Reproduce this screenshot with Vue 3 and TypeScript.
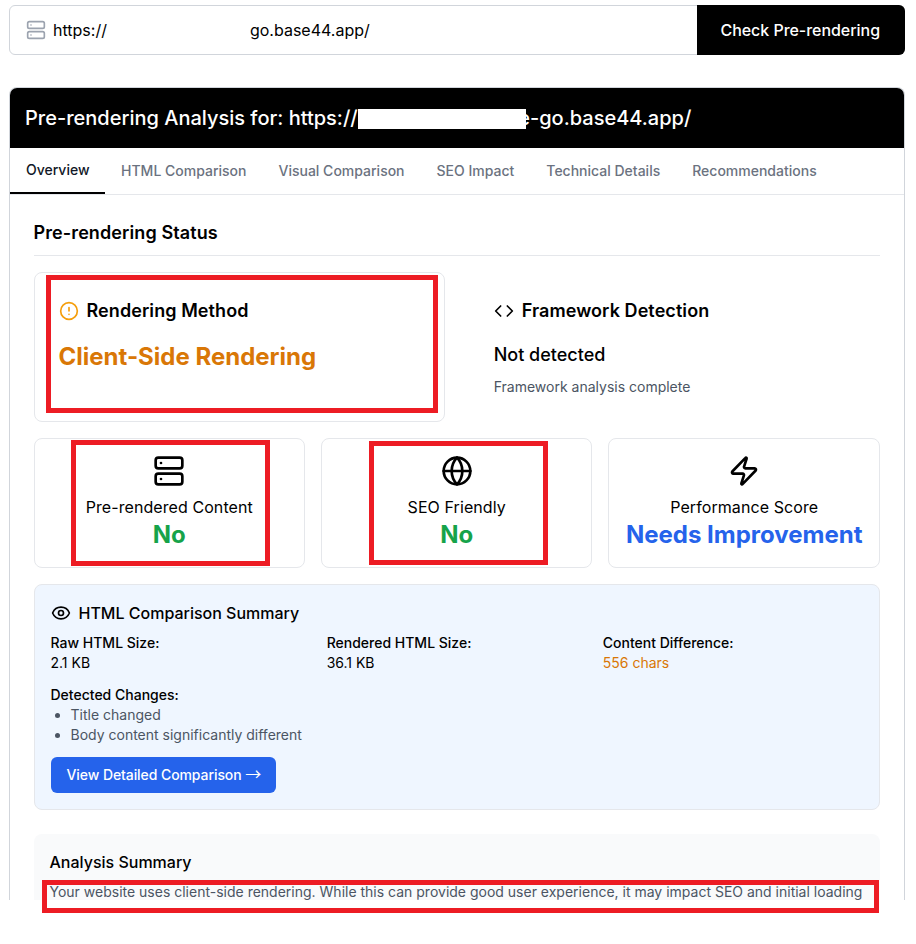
<script setup lang="ts">
const tabs: string[] = ['HTML Comparison', 'Visual Comparison', 'SEO Impact', 'Technical Details', 'Recommendations']
</script>

<template>
  <div class="root">
    <div class="page">
      <form class="search" @submit.prevent>
        <div class="url">
          <svg class="icon url-icon" viewBox="0 0 24 24">
            <rect x="2" y="2" width="20" height="8" rx="2" />
            <rect x="2" y="14" width="20" height="8" rx="2" />
            <line x1="6" y1="6" x2="6.01" y2="6" />
            <line x1="6" y1="18" x2="6.01" y2="18" />
          </svg>
          <span>https://</span>
          <span class="url-end">go.base44.app/</span>
        </div>
        <button class="check" type="button">Check Pre-rendering</button>
      </form>

      <section class="report">
        <header class="report-head">
          <h1>Pre-rendering Analysis for: https://<span class="mask"></span><span class="peek">e</span>-go.base44.app/</h1>
        </header>
        <nav class="tabs">
          <a class="tab active">Overview</a>
          <a v-for="t in tabs" :key="t" class="tab">{{ t }}</a>
        </nav>
        <div class="content">
          <h2 class="status-title">Pre-rendering Status</h2>

          <div class="two">
            <div class="panel">
              <h3 class="panel-title">
                <svg class="icon amber" viewBox="0 0 24 24">
                  <circle cx="12" cy="12" r="10" />
                  <line x1="12" y1="8" x2="12" y2="12" />
                  <line x1="12" y1="16" x2="12.01" y2="16" />
                </svg>
                Rendering Method
              </h3>
              <p class="method">Client-Side Rendering</p>
            </div>
            <div class="panel plain">
              <h3 class="panel-title">
                <svg class="icon" viewBox="0 0 24 24">
                  <polyline points="16 18 22 12 16 6" />
                  <polyline points="8 6 2 12 8 18" />
                </svg>
                Framework Detection
              </h3>
              <p class="detected">Not detected</p>
              <p class="note">Framework analysis complete</p>
            </div>
          </div>

          <div class="three">
            <div class="metric">
              <svg class="icon big" viewBox="0 0 24 24">
                <rect x="2" y="2" width="20" height="8" rx="2" />
                <rect x="2" y="14" width="20" height="8" rx="2" />
                <line x1="6" y1="6" x2="6.01" y2="6" />
                <line x1="6" y1="18" x2="6.01" y2="18" />
              </svg>
              <div class="metric-label">Pre-rendered Content</div>
              <div class="metric-value green">No</div>
            </div>
            <div class="metric">
              <svg class="icon big" viewBox="0 0 24 24">
                <circle cx="12" cy="12" r="10" />
                <path d="M12 2a14.5 14.5 0 0 0 0 20 14.5 14.5 0 0 0 0-20" />
                <path d="M2 12h20" />
              </svg>
              <div class="metric-label">SEO Friendly</div>
              <div class="metric-value green">No</div>
            </div>
            <div class="metric">
              <svg class="icon big" viewBox="0 0 24 24">
                <path d="M4 14a1 1 0 0 1-.78-1.63l9.9-10.2a.5.5 0 0 1 .86.46l-1.92 6.02A1 1 0 0 0 13 10h7a1 1 0 0 1 .78 1.63l-9.9 10.2a.5.5 0 0 1-.86-.46l1.92-6.02A1 1 0 0 0 11 14z" />
              </svg>
              <div class="metric-label">Performance Score</div>
              <div class="metric-value blue">Needs Improvement</div>
            </div>
          </div>

          <div class="compare">
            <h3 class="compare-title">
              <svg class="icon" viewBox="0 0 24 24">
                <path d="M2.062 12.348a1 1 0 0 1 0-.696 10.75 10.75 0 0 1 19.876 0 1 1 0 0 1 0 .696 10.75 10.75 0 0 1-19.876 0" />
                <circle cx="12" cy="12" r="3" />
              </svg>
              HTML Comparison Summary
            </h3>
            <div class="sizes">
              <div><div class="label">Raw HTML Size:</div><div>2.1 KB</div></div>
              <div><div class="label">Rendered HTML Size:</div><div>36.1 KB</div></div>
              <div><div class="label">Content Difference:</div><div class="orange">556 chars</div></div>
            </div>
            <div class="label">Detected Changes:</div>
            <ul class="changes">
              <li>Title changed</li>
              <li>Body content significantly different</li>
            </ul>
            <button class="detail" type="button">View Detailed Comparison <span class="arrow">→</span></button>
          </div>

          <div class="summary">
            <h3 class="summary-title">Analysis Summary</h3>
            <p class="summary-text">Your website uses client-side rendering. While this can provide good user experience, it may impact SEO and initial loading</p>
          </div>
        </div>
      </section>
    </div>

    <div class="mark mark-method"></div>
    <div class="mark mark-content"></div>
    <div class="mark mark-seo"></div>
    <div class="mark mark-text"></div>
  </div>
</template>

<style>
html, body { background: #fff; }
</style>

<style scoped>
* { box-sizing: border-box; }
.root {
  position: relative;
  width: 916px;
  height: 944px;
  background: #fff;
  color: #000;
  font-family: Inter, "Liberation Sans", sans-serif;
  font-size: 14px;
  line-height: 20px;
}
.page {
  display: flex;
  flex-direction: column;
  height: 900px;
  padding: 5px 11px 0 9px;
}
h1, h2, h3, p, ul { margin: 0; padding: 0; }

.icon {
  flex: none;
  width: 20px;
  height: 20px;
  fill: none;
  stroke: currentColor;
  stroke-width: 2;
  stroke-linecap: round;
  stroke-linejoin: round;
}
.icon.big { width: 32px; height: 32px; margin-bottom: 8px; }
.amber { color: #f59e0b; }

.search {
  display: flex;
  flex: none;
  height: 50px;
  margin-bottom: 32px;
  border: 1px solid #d1d5db;
  border-radius: 6px;
}
.url {
  flex: 1;
  display: flex;
  align-items: center;
  padding-left: 16px;
  font-size: 16px;
}
.url-icon { color: #9ca3af; margin-right: 7px; }
.url-end { margin-left: 143px; }
.check {
  width: 208px;
  margin: -1px;
  padding: 0 1.5px 0 0;
  border: 0;
  border-radius: 0 6px 6px 0;
  background: #000;
  color: #fff;
  font: 500 16px/24px Inter, "Liberation Sans", sans-serif;
  letter-spacing: -0.04px;
}

.report {
  flex: 1;
  border: 1px solid #d1d5db;
  border-bottom: 0;
  border-radius: 8px 8px 0 0;
}
.report-head {
  padding: 16px 15px;
  background: #000;
  border-radius: 7px 7px 0 0;
  color: #fff;
}
.report-head h1 {
  font-size: 20px;
  line-height: 28px;
  font-weight: 500;
}
.mask {
  display: inline-block;
  width: 168.5px;
  height: 20px;
  vertical-align: -4px;
  background: #fff;
}
.peek { margin-left: -8px; }

.tabs {
  display: flex;
  border-bottom: 1px solid #e5e7eb;
}
.tab {
  padding: 13px 16px 11px;
  border-bottom: 2px solid transparent;
  color: #6b7280;
  font-weight: 500;
}
.tab.active {
  color: #111827;
  border-bottom-color: #000;
  padding-top: 12px;
  padding-bottom: 12px;
  padding-right: 15.5px;
}

.content { padding: 24px 24.1px 0 23.5px; }
.status-title {
  padding-bottom: 8px;
  margin-bottom: 16px;
  border-bottom: 1px solid #e5e7eb;
  font-size: 18px;
  line-height: 28px;
  font-weight: 600;
  letter-spacing: 0.1px;
}

.two {
  display: grid;
  grid-template-columns: 1fr 1fr;
  gap: 24px;
  margin-bottom: 16px;
}
.panel {
  padding: 24px;
  border: 1px solid #e5e7eb;
  border-radius: 8px;
}
.panel.plain { border-color: transparent; }
.panel-title {
  display: flex;
  align-items: center;
  gap: 8px;
  margin-bottom: 16px;
  font-size: 18px;
  line-height: 28px;
  font-weight: 600;
  letter-spacing: 0.08px;
}
.method {
  color: #d97706;
  font-size: 24px;
  line-height: 32px;
  font-weight: 700;
}
.detected { font-size: 18px; line-height: 28px; font-weight: 500; }
.note { margin-top: 8px; color: #4b5563; }

.three {
  display: grid;
  grid-template-columns: repeat(3, 1fr);
  gap: 16px;
  margin-bottom: 16px;
}
.metric {
  display: flex;
  flex-direction: column;
  align-items: center;
  padding: 16px;
  border: 1px solid #e5e7eb;
  border-radius: 8px;
  text-align: center;
}
.metric-label { font-size: 16px; line-height: 24px; letter-spacing: 0.08px; }
.metric-value { font-size: 24px; line-height: 32px; font-weight: 700; white-space: nowrap; }
.green { color: #16a34a; }
.blue { color: #2563eb; }

.compare {
  padding: 16px;
  margin-bottom: 24px;
  background: #eff6ff;
  border: 1px solid #e5e7eb;
  border-radius: 8px;
}
.compare-title {
  display: flex;
  align-items: center;
  gap: 8px;
  margin-bottom: 8px;
  font-size: 16px;
  line-height: 24px;
  font-weight: 500;
}
.sizes {
  display: grid;
  grid-template-columns: repeat(3, 1fr);
  gap: 16px;
  margin-bottom: 12px;
}
.label { font-weight: 500; }
.orange { color: #d97706; }
.changes {
  margin-bottom: 12px;
  padding-left: 20px;
  color: #4b5563;
  list-style: disc;
}
.detail {
  display: block;
  width: 225px;
  height: 36px;
  padding: 0 0 0 16px;
  border: 0;
  border-radius: 6px;
  background: #2563eb;
  color: #fff;
  font: 500 14px/20px Inter, "Liberation Sans", sans-serif;
  letter-spacing: -0.08px;
  text-align: left;
  white-space: nowrap;
}
.arrow {
  font-family: "Noto Sans CJK JP", sans-serif;
  font-weight: 400;
  font-size: 16px;
  line-height: 0;
}

.summary {
  height: 66px;
  padding: 16px 16px 0;
  background: #f9fafb;
  border-radius: 8px 8px 0 0;
}
.summary-title {
  margin-bottom: 10px;
  font-size: 16px;
  line-height: 24px;
  font-weight: 500;
}
.summary-text { color: #4b5563; line-height: 16px; white-space: nowrap; }

.mark {
  position: absolute;
  border: 5px solid #ed1c24;
}
.mark-method { left: 46px; top: 275px; width: 392px; height: 138px; }
.mark-content { left: 71px; top: 440px; width: 199px; height: 126px; }
.mark-seo { left: 369px; top: 441px; width: 179px; height: 124px; }
.mark-text { left: 42px; top: 880px; width: 837px; height: 33px; }
</style>
